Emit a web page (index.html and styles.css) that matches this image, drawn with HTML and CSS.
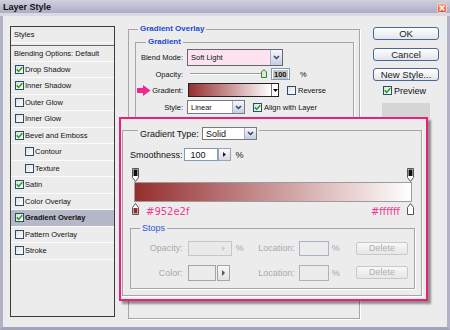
FILE: index.html
```html
<!DOCTYPE html>
<html lang="en">
<head>
    <meta charset="UTF-8">
    <meta name="viewport" content="width=device-width, initial-scale=1.0">
    <title>Layer Style</title>
    <link rel="stylesheet" href="styles.css">
</head>
<body>
    <div class="window">
        <div class="titlebar">
            <span class="title">Layer Style</span>
            <span class="close">
                <svg width="6" height="6" viewBox="0 0 6 6"><path d="M0.6 0.6l4.8 4.8M5.4 0.6l-4.8 4.8" stroke="#fff" stroke-width="1.4"/></svg>
            </span>
        </div>

        <div class="frame">
            <!-- styles list -->
            <div class="layer-list">
                <div class="layer-item head first">Styles</div>
                <div class="layer-item head">Blending Options: Default</div>
                <div class="layer-item"><span class="check"><svg width="7" height="7" viewBox="0 0 7 7"><path d="M0.8 3.4l1.9 2L6.3 1.2" fill="none" stroke="#1fa51f" stroke-width="1.6"/></svg></span>Drop Shadow</div>
                <div class="layer-item"><span class="check"><svg width="7" height="7" viewBox="0 0 7 7"><path d="M0.8 3.4l1.9 2L6.3 1.2" fill="none" stroke="#1fa51f" stroke-width="1.6"/></svg></span>Inner Shadow</div>
                <div class="layer-item"><span class="check"></span>Outer Glow</div>
                <div class="layer-item"><span class="check"></span>Inner Glow</div>
                <div class="layer-item"><span class="check"><svg width="7" height="7" viewBox="0 0 7 7"><path d="M0.8 3.4l1.9 2L6.3 1.2" fill="none" stroke="#1fa51f" stroke-width="1.6"/></svg></span>Bevel and Emboss</div>
                <div class="layer-item sub"><span class="check"></span>Contour</div>
                <div class="layer-item sub"><span class="check"></span>Texture</div>
                <div class="layer-item"><span class="check"><svg width="7" height="7" viewBox="0 0 7 7"><path d="M0.8 3.4l1.9 2L6.3 1.2" fill="none" stroke="#1fa51f" stroke-width="1.6"/></svg></span>Satin</div>
                <div class="layer-item"><span class="check"></span>Color Overlay</div>
                <div class="layer-item active"><span class="check"><svg width="7" height="7" viewBox="0 0 7 7"><path d="M0.8 3.4l1.9 2L6.3 1.2" fill="none" stroke="#1fa51f" stroke-width="1.6"/></svg></span>Gradient Overlay</div>
                <div class="layer-item"><span class="check"></span>Pattern Overlay</div>
                <div class="layer-item"><span class="check"></span>Stroke</div>
            </div>

            <!-- gradient overlay settings -->
            <fieldset class="group overlay-group">
                <legend>Gradient Overlay</legend>
                <fieldset class="group gradient-group">
                    <legend>Gradient</legend>

                    <div class="field-row blend-row">
                        <span class="field-label">Blend Mode:</span>
                        <div class="select blend-select">
                            <span class="select-text">Soft Light</span>
                            <span class="select-btn"><svg width="7" height="5" viewBox="0 0 7 5"><path d="M1 1l2.5 2.5L6 1" fill="none" stroke="#33456a" stroke-width="1.5"/></svg></span>
                        </div>
                    </div>

                    <div class="field-row opacity-row">
                        <span class="field-label">Opacity:</span>
                        <div class="slider">
                            <span class="thumb"><svg width="6" height="9" viewBox="0 0 6 9"><path d="M3 0.5L5.5 3v5.5h-5V3z" fill="#d5ecd0" stroke="#3f7b46"/></svg></span>
                        </div>
                        <span class="num-field"><span class="num-sel">100</span></span>
                        <span class="unit">%</span>
                    </div>

                    <div class="field-row gradient-row">
                        <span class="field-label arrow-label">
                            <svg width="14" height="11" viewBox="0 0 14 11"><path d="M0 3h6V0l7.5 5.5L6 11V8H0z" fill="#f2288d"/></svg>
                            <span>Gradient:</span>
                        </span>
                        <div class="gradient-box">
                            <span class="gradient-fill"></span>
                            <span class="gradient-drop"><svg width="5" height="3" viewBox="0 0 5 3"><path d="M0 0h5L2.5 3z" fill="#000"/></svg></span>
                        </div>
                        <span class="check-label"><span class="check"></span>Reverse</span>
                    </div>

                    <div class="field-row mode-row">
                        <span class="field-label">Style:</span>
                        <div class="select linear-select">
                            <span class="select-text">Linear</span>
                            <span class="select-btn"><svg width="7" height="5" viewBox="0 0 7 5"><path d="M1 1l2.5 2.5L6 1" fill="none" stroke="#33456a" stroke-width="1.5"/></svg></span>
                        </div>
                        <span class="check-label"><span class="check"><svg width="7" height="7" viewBox="0 0 7 7"><path d="M0.8 3.4l1.9 2L6.3 1.2" fill="none" stroke="#1fa51f" stroke-width="1.6"/></svg></span>Align with Layer</span>
                    </div>
                </fieldset>
            </fieldset>

            <!-- dialog buttons -->
            <div class="actions">
                <button class="btn">OK</button>
                <button class="btn">Cancel</button>
                <button class="btn">New Style...</button>
                <div class="preview"><span class="check"><svg width="7" height="7" viewBox="0 0 7 7"><path d="M0.8 3.4l1.9 2L6.3 1.2" fill="none" stroke="#1fa51f" stroke-width="1.6"/></svg></span>Preview</div>
                <div class="swatch"></div>
            </div>
        </div>

        <!-- gradient editor crop -->
        <div class="editor">
            <fieldset class="editor-frame">
                <legend class="type-legend">
                    <span class="type-inner">
                        <span>Gradient Type:</span>
                        <span class="select solid-select">
                            <span class="select-text">Solid</span>
                            <span class="select-btn"><svg width="7" height="5" viewBox="0 0 7 5"><path d="M1 1l2.5 2.5L6 1" fill="none" stroke="#33456a" stroke-width="1.5"/></svg></span>
                        </span>
                    </span>
                </legend>

                <div class="smooth-row">
                    <span>Smoothness:</span>
                    <span class="smooth-box">100</span>
                    <span class="step-btn"><svg width="3" height="5" viewBox="0 0 3 5"><path d="M0 0l3 2.5L0 5z" fill="#222"/></svg></span>
                    <span class="pct">%</span>
                </div>

                <div class="gradient-edit">
                    <div class="stop-row top">
                        <svg width="7" height="14" viewBox="0 0 7 14"><path d="M0.5 0.5h6v9l-3 4-3-4z" fill="#fff" stroke="#555"/><rect x="1.5" y="1.5" width="4" height="6.5" fill="#111"/></svg>
                        <svg width="7" height="14" viewBox="0 0 7 14"><path d="M0.5 0.5h6v9l-3 4-3-4z" fill="#fff" stroke="#555"/><rect x="1.5" y="1.5" width="4" height="6.5" fill="#111"/></svg>
                    </div>
                    <div class="bar"></div>
                    <div class="stop-row bottom">
                        <span class="stop-label">
                            <svg width="7" height="12" viewBox="0 0 7 12"><path d="M3.5 0.5l3 4v7h-6v-7z" fill="#fff" stroke="#555"/><rect x="1.5" y="5" width="4" height="5.5" fill="#952e2f"/></svg>
                            <span class="hex">#952e2f</span>
                        </span>
                        <span class="stop-label">
                            <span class="hex">#ffffff</span>
                            <svg width="7" height="12" viewBox="0 0 7 12"><path d="M3.5 0.5l3 4v7h-6v-7z" fill="#fff" stroke="#555"/><rect x="1.5" y="5" width="4" height="5.5" fill="#fff"/></svg>
                        </span>
                    </div>
                </div>

                <fieldset class="group stops-group">
                    <legend>Stops</legend>
                    <div class="stops-grid">
                        <span class="stops-label">Opacity:</span>
                        <span class="ctl">
                            <span class="dis-input"><svg width="3" height="5" viewBox="0 0 3 5"><path d="M0 0l3 2.5L0 5z" fill="#c9c9c9"/></svg></span>
                            <span class="pct">%</span>
                        </span>
                        <span class="loc-label">Location:</span>
                        <span class="loc-input"></span>
                        <span class="loc-pct">%</span>
                        <span class="delete">Delete</span>

                        <span class="stops-label">Color:</span>
                        <span class="ctl">
                            <span class="color-box"></span>
                            <span class="color-btn"><svg width="3" height="6" viewBox="0 0 3 6"><path d="M0 0l3 3L0 6z" fill="#555"/></svg></span>
                        </span>
                        <span class="loc-label">Location:</span>
                        <span class="loc-input"></span>
                        <span class="loc-pct">%</span>
                        <span class="delete">Delete</span>
                    </div>
                </fieldset>
            </fieldset>
        </div>
    </div>
</body>
</html>
```

FILE: styles.css
```css
* {
    box-sizing: border-box;
}

body {
    margin: 0;
    background-color: #ececec;
    font-family: "Liberation Sans", Arial, sans-serif;
}

.window {
    position: relative;
    width: 450px;
    height: 330px;
    font-size: 7.5px;
    color: #111;
    background-color: #ececec;
}

/* title bar */
.titlebar {
    display: flex;
    justify-content: space-between;
    align-items: flex-start;
    height: 16px;
    padding: 0 3px;
    background: linear-gradient(#d0d0de 0, #acacc3 13px, #d9d9e5 13px);
}

.title {
    font-size: 9px;
    font-weight: bold;
    line-height: 13px;
    padding-top: 1px;
}

.close {
    display: flex;
    align-items: center;
    justify-content: center;
    width: 10px;
    height: 10px;
    margin-top: 3px;
    border: 1px solid #f6d0c4;
    border-radius: 2px;
    background: linear-gradient(#f3a083, #d9552f);
}

.frame {
    display: flex;
    align-items: flex-start;
    height: 314px;
    padding: 10px 0 0 7px;
    border: 3px solid #b1b1c8;
    border-top: 0;
    border-bottom-color: #a2a2bc;
}

/* styles list */
.layer-list {
    flex-shrink: 0;
    width: 105px;
    height: 291px;
    border: 1px solid #3c3c3c;
}

.layer-item {
    display: flex;
    align-items: center;
    gap: 1px;
    height: 16.5px;
    padding-left: 4px;
    border-bottom: 1px solid #fcfcfc;
    white-space: nowrap;
}

.layer-item.head {
    padding-left: 3px;
}

.layer-item.first {
    height: 16px;
    margin-bottom: 1.5px;
}

.layer-item.first + .head {
    height: 17px;
    border-top: 1px solid #6a6a6a;
}

.layer-item.sub {
    padding-left: 14px;
}

.layer-item.active {
    background-color: #b5b8c7;
    font-weight: bold;
}

.check {
    display: flex;
    align-items: center;
    justify-content: center;
    flex-shrink: 0;
    width: 9px;
    height: 9px;
    border: 1px solid #2d4b6b;
    background: linear-gradient(135deg, #dedede, #fff);
}

/* group boxes */
.group {
    margin: 0;
    border: 1px solid #a6a6a6;
    box-shadow: 1px 1px 0 #fff;
}

.group > legend {
    padding: 0 2px;
    color: #2148d4;
    font-size: 8px;
    font-weight: bold;
    line-height: 10px;
}

.overlay-group {
    flex-shrink: 0;
    width: 232px;
    height: 295px;
    margin: -2px 13px 0 13px;
    padding: 3px 5px 0 6px;
}

.overlay-group > legend {
    margin-left: 3px;
}

.gradient-group {
    padding: 2px 0 8px 0;
}

.gradient-group > legend {
    margin-left: 10px;
}

.field-row {
    display: flex;
    align-items: center;
    white-space: nowrap;
}

.field-label {
    flex-shrink: 0;
    width: 47px;
    margin-right: 4px;
    text-align: right;
}

.blend-row {
    height: 17px;
}

.opacity-row {
    height: 12px;
    margin-top: 2px;
}

.gradient-row {
    height: 14px;
    margin-top: 3px;
}

.mode-row {
    height: 14px;
    margin-top: 3px;
}

.select {
    display: flex;
    height: 100%;
    border: 1px solid #7a7a84;
    background-color: #fff;
}

.blend-select {
    width: 96px;
    border-color: #66666e;
    background-color: #fde3ef;
}

.linear-select {
    width: 58px;
}

.select-text {
    display: flex;
    align-items: center;
    flex: 1;
    padding-left: 3px;
}

.select-btn {
    display: flex;
    align-items: center;
    justify-content: center;
    width: 12px;
    border-left: 1px solid #a9b2c4;
    background: linear-gradient(#f5f7fb, #c6cedd);
}

.slider {
    position: relative;
    width: 77px;
    height: 2px;
    margin-left: 3px;
    border-top: 1px solid #9a9a9a;
    border-bottom: 1px solid #fff;
}

.thumb {
    position: absolute;
    right: 0;
    top: -5px;
    line-height: 0;
}

.num-field {
    display: flex;
    align-items: center;
    width: 19px;
    height: 12px;
    margin-left: 4px;
    padding-left: 1px;
    border: 1px solid #7f9db9;
    background-color: #fff;
}

.num-sel {
    padding: 0 1px;
    background-color: #c4c4c4;
    font-weight: bold;
    line-height: 9px;
}

.unit {
    margin-left: 10px;
}

.arrow-label {
    display: flex;
    align-items: center;
    justify-content: space-between;
    padding-left: 1px;
}

.gradient-box {
    display: flex;
    width: 91px;
    height: 14px;
    margin-left: 1px;
    border: 1px solid #222;
}

.gradient-fill {
    flex: 1;
    background: linear-gradient(to right, #952e2f, #fff);
}

.gradient-drop {
    display: flex;
    align-items: center;
    justify-content: center;
    width: 7px;
    border-left: 1px solid #777;
    background-color: #fff;
}

.check-label {
    display: flex;
    align-items: center;
    gap: 2px;
    margin-left: 8px;
}

/* buttons column */
.actions {
    display: flex;
    flex-direction: column;
    flex-shrink: 0;
    width: 66px;
    margin-top: 1px;
}

.btn {
    height: 13px;
    padding: 0;
    border: 1px solid #486895;
    border-radius: 3px;
    background: linear-gradient(#fff, #e2e4eb);
    color: #222;
    font-family: inherit;
    font-size: 9.5px;
    line-height: 11px;
}

.btn + .btn {
    margin-top: 7.5px;
}

.preview {
    display: flex;
    align-items: center;
    gap: 2px;
    height: 11px;
    margin-top: 4px;
    padding-left: 10px;
    font-size: 9px;
}

.swatch {
    width: 48px;
    height: 16px;
    margin: 7px 0 0 9px;
    background-color: #d5d5d5;
}

/* gradient editor crop */
.editor {
    position: absolute;
    left: 119px;
    top: 117px;
    width: 309px;
    padding: 1px 4px 3px 1px;
    border: 2px solid #ec1f7d;
    background-color: #ececec;
    box-shadow: 3px 3px 2px rgba(0, 0, 0, 0.4);
    font-size: 9px;
}

.editor-frame {
    margin: 0;
    padding: 0 6px 6px 7px;
    border: 1px solid #a6a6a6;
    box-shadow: 1px 1px 0 #fff;
}

.type-legend {
    margin-left: 8px;
    padding: 7px 2px 0 2px;
}

.type-inner {
    display: flex;
    align-items: center;
    gap: 3px;
    height: 13px;
}

.solid-select {
    width: 55px;
    height: 13px;
}

.smooth-row {
    display: flex;
    align-items: center;
    height: 13px;
    margin-top: 8px;
}

.smooth-box {
    display: flex;
    align-items: center;
    width: 34px;
    height: 13px;
    margin-left: 1px;
    padding-left: 6px;
    border: 1px solid #7f9db9;
    background-color: #fff;
}

.step-btn {
    display: flex;
    align-items: center;
    justify-content: center;
    width: 13px;
    height: 13px;
    border: 1px solid #9aa3b5;
    background: linear-gradient(#fbfbfd, #d7dbe5);
}

.smooth-row .pct {
    margin-left: 5px;
}

.gradient-edit {
    width: 278px;
    margin: 7px 0 0 4px;
}

.stop-row {
    display: flex;
    justify-content: space-between;
    margin: 0 -2px;
}

.stop-row.top {
    height: 14px;
}

.bar {
    height: 20px;
    border: 1px solid #9c9c9c;
    background: linear-gradient(to right, #952e2f, #fff);
}

.stop-row.bottom {
    align-items: flex-start;
    height: 15px;
    margin-top: 1px;
}

.stop-label {
    display: flex;
    align-items: flex-start;
    gap: 7px;
}

.hex {
    margin-top: 2px;
    color: #ef3a8e;
    font-family: "DejaVu Sans", Verdana, sans-serif;
    font-size: 10px;
    line-height: 13px;
}

.stops-group {
    margin-top: 4.5px;
    padding: 0 0 7px 0;
}

.stops-group > legend {
    margin-left: 9px;
    color: #2f55d8;
    font-size: 9px;
    font-weight: normal;
    line-height: 11px;
}

.stops-grid {
    display: grid;
    grid-template-columns: 56.7px 70.6px 41px 30px 26.7px 52px;
    grid-template-rows: 15px 16.5px;
    row-gap: 9px;
    align-items: center;
    margin-top: 7px;
    color: #a9a9a9;
}

.stops-label {
    padding-right: 5px;
    text-align: right;
}

.ctl {
    display: flex;
    align-items: center;
    height: 100%;
}

.dis-input {
    display: flex;
    align-items: center;
    justify-content: flex-end;
    width: 44px;
    height: 100%;
    padding-right: 6px;
    border: 1px solid #c6c6c6;
    background-color: #e9e9e9;
}

.ctl .pct {
    margin-left: 4px;
}

.color-box {
    width: 28px;
    height: 100%;
    border: 1px solid #a5a5a5;
    background-color: #ececec;
}

.color-btn {
    display: flex;
    align-items: center;
    justify-content: center;
    width: 13px;
    height: 100%;
    margin-left: 1px;
    border: 1px solid #a5a5a5;
    background: linear-gradient(#f8f8f8, #e2e2e2);
}

.loc-input {
    height: 100%;
    border: 1px solid #aab3c2;
    background-color: #ececec;
}

.loc-pct {
    padding-left: 2.5px;
}

.delete {
    height: 13px;
    border: 1px solid #c8c8c8;
    border-radius: 2px;
    background: linear-gradient(#f8f8f8, #e6e6e6);
    color: #b0b0b0;
    line-height: 11px;
    text-align: center;
}
```
